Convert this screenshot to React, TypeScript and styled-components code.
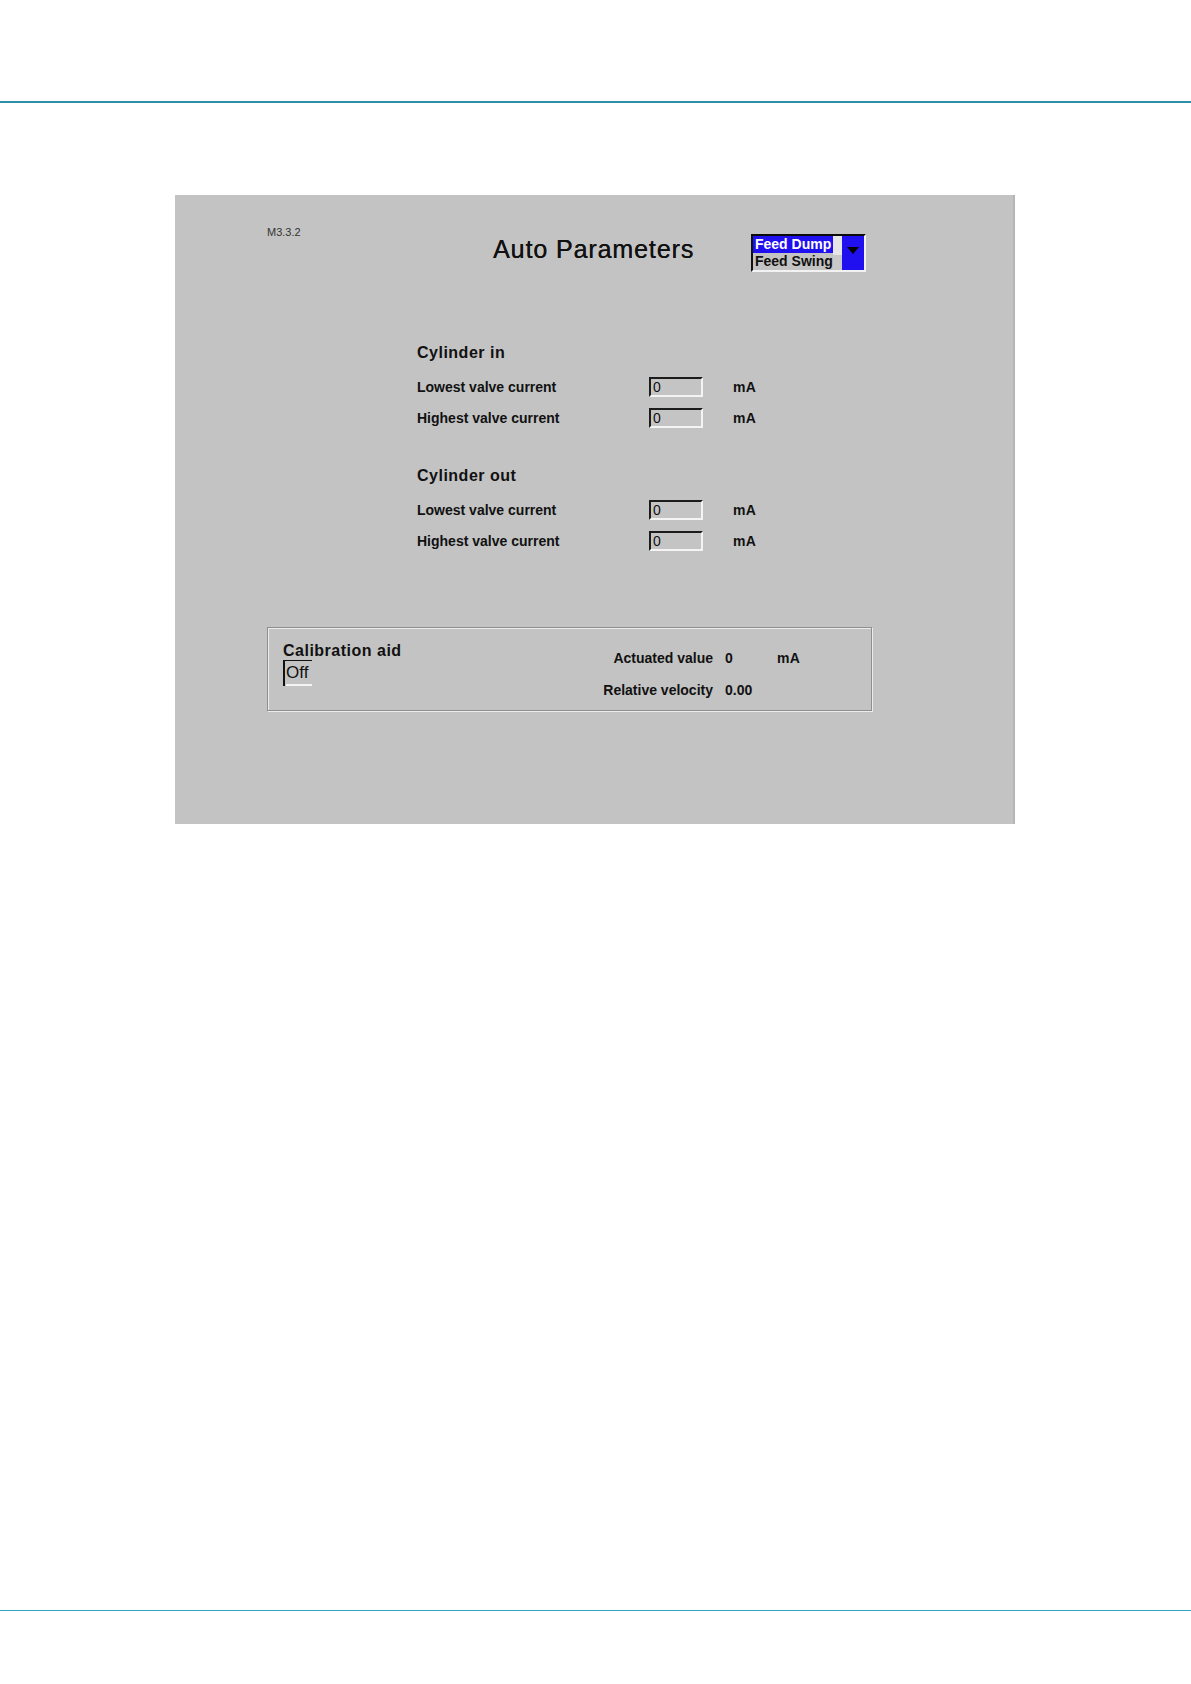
import React from "react";
import styled, { createGlobalStyle } from "styled-components";

const Global = createGlobalStyle`
  html, body { margin: 0; padding: 0; background: #ffffff; }
  body { font-family: "Liberation Sans", Arial, sans-serif; color: #111; }
  * { box-sizing: border-box; }
`;

const Page = styled.div`
  width: 1191px;
  min-height: 1684px;
  display: flex;
  flex-direction: column;
`;

const Rule = styled.div<{ $top: number; $h: number; $color: string }>`
  margin-top: ${(p) => p.$top}px;
  height: ${(p) => p.$h}px;
  background: ${(p) => p.$color};
  width: 100%;
`;

const Panel = styled.div`
  margin: 92px 0 0 175px;
  width: 840px;
  height: 629px;
  background: #c3c3c3;
  border-right: 2px solid #b6b6b6;
  display: flex;
  flex-direction: column;
`;

const Header = styled.div`
  display: flex;
  align-items: flex-start;
  padding-left: 92px;
  height: 77px;
`;

const Version = styled.div`
  width: 226px;
  margin-top: 31px;
  font-size: 11px;
  line-height: 12px;
  color: #333;
`;

const Title = styled.div`
  width: 258px;
  margin-top: 39px;
  font-size: 25px;
  line-height: 30px;
  letter-spacing: 0.9px;
  color: #111;
  text-shadow: 0.3px 0 0 #111;
`;

const Dropdown = styled.div`
  margin-top: 39px;
  width: 115px;
  height: 38px;
  display: flex;
  border-top: 2px solid #0a0a0a;
  border-left: 2px solid #111;
  border-bottom: 2px solid #f2f2f2;
  border-right: 2px solid #f2f2f2;
`;

const List = styled.div`
  width: 80px;
  display: flex;
  flex-direction: column;
`;

const Item = styled.div<{ $selected?: boolean }>`
  height: 17px;
  line-height: 17px;
  padding-left: 2px;
  font-size: 14px;
  font-weight: bold;
  white-space: nowrap;
  background: ${(p) => (p.$selected ? "#2010f0" : "transparent")};
  color: ${(p) => (p.$selected ? "#ffffff" : "#111")};
`;

const Track = styled.div`
  width: 9px;
  background: linear-gradient(#e6e6e6 0 55%, #c9c9c9 55% 100%);
`;

const ArrowButton = styled.div`
  width: 22px;
  background: #2010f0;
  display: flex;
  justify-content: center;
  align-items: flex-start;
  padding-top: 11px;
`;

const Sections = styled.div`
  padding-left: 242px;
  display: flex;
  flex-direction: column;
`;

const Section = styled.div<{ $top: number }>`
  margin-top: ${(p) => p.$top}px;
  display: flex;
  flex-direction: column;
`;

const Heading = styled.div`
  height: 20px;
  line-height: 20px;
  font-size: 16px;
  font-weight: bold;
  letter-spacing: 0.5px;
  margin-bottom: 8px;
  white-space: nowrap;
`;

const Row = styled.div`
  height: 31px;
  display: grid;
  grid-template-columns: 232px 84px auto;
  align-items: center;
`;

const Label = styled.div`
  font-size: 14px;
  font-weight: bold;
  white-space: nowrap;
`;

const Field = styled.div`
  width: 54px;
  height: 20px;
  border-top: 2px solid #1c1c1c;
  border-left: 2px solid #1c1c1c;
  border-right: 2px solid #f4f4f4;
  border-bottom: 2px solid #f4f4f4;
  background: #c4c4c4;
  font-size: 14px;
  line-height: 16px;
  padding-left: 2px;
  color: #111;
`;

const Unit = styled.div`
  font-size: 14px;
  font-weight: bold;
  letter-spacing: 0.4px;
`;

const CalBox = styled.div`
  margin: 71px 0 0 92px;
  width: 605px;
  height: 84px;
  border: 1px solid #8e8e8e;
  box-shadow: inset 1px 1px 0 #ececec, 1px 1px 0 #ececec;
  padding: 13px 0 0 15px;
  display: flex;
  align-items: flex-start;
`;

const CalLeft = styled.div`
  width: 318px;
  display: flex;
  flex-direction: column;
`;

const CalHeading = styled(Heading)`
  margin-bottom: 0;
`;

const Toggle = styled.div`
  margin-top: -1px;
  width: 29px;
  height: 26px;
  border-top: 1px solid #111;
  border-left: 2px solid #111;
  font-size: 17px;
  line-height: 23px;
  padding-left: 1px;
  color: #111;
  position: relative;
  &::after {
    content: "";
    position: absolute;
    left: 1px;
    right: 0;
    bottom: 0;
    height: 2px;
    background: #f4f4f4;
  }
`;

const Readouts = styled.div`
  margin-top: 1px;
  display: grid;
  grid-template-columns: 112px 40px auto;
  column-gap: 12px;
  grid-auto-rows: 32px;
  align-items: center;
`;

const ReadLabel = styled(Label)`
  text-align: right;
`;

const Value = styled(Label)``;

const rows = [
  {
    title: "Cylinder in",
    top: 71,
    items: ["Lowest valve current", "Highest valve current"],
  },
  {
    title: "Cylinder out",
    top: 33,
    items: ["Lowest valve current", "Highest valve current"],
  },
];

export default function App() {
  return (
    <Page>
      <Global />
      <Rule $top={101} $h={2} $color="#2b8fa6" />
      <Panel>
        <Header>
          <Version>M3.3.2</Version>
          <Title>Auto Parameters</Title>
          <Dropdown>
            <List>
              <Item $selected>Feed Dump</Item>
              <Item>Feed Swing</Item>
            </List>
            <Track />
            <ArrowButton>
              <svg width="12" height="7" viewBox="0 0 12 7">
                <path d="M0 0 H12 L6 7 Z" fill="#000" />
              </svg>
            </ArrowButton>
          </Dropdown>
        </Header>
        <Sections>
          {rows.map((s) => (
            <Section key={s.title} $top={s.top}>
              <Heading>{s.title}</Heading>
              {s.items.map((it) => (
                <Row key={it}>
                  <Label>{it}</Label>
                  <Field>0</Field>
                  <Unit>mA</Unit>
                </Row>
              ))}
            </Section>
          ))}
        </Sections>
        <CalBox>
          <CalLeft>
            <CalHeading>Calibration aid</CalHeading>
            <Toggle>Off</Toggle>
          </CalLeft>
          <Readouts>
            <ReadLabel>Actuated value</ReadLabel>
            <Value>0</Value>
            <Unit>mA</Unit>
            <ReadLabel>Relative velocity</ReadLabel>
            <Value>0.00</Value>
            <span />
          </Readouts>
        </CalBox>
      </Panel>
      <Rule $top={786} $h={1} $color="#34a3c9" />
    </Page>
  );
}
